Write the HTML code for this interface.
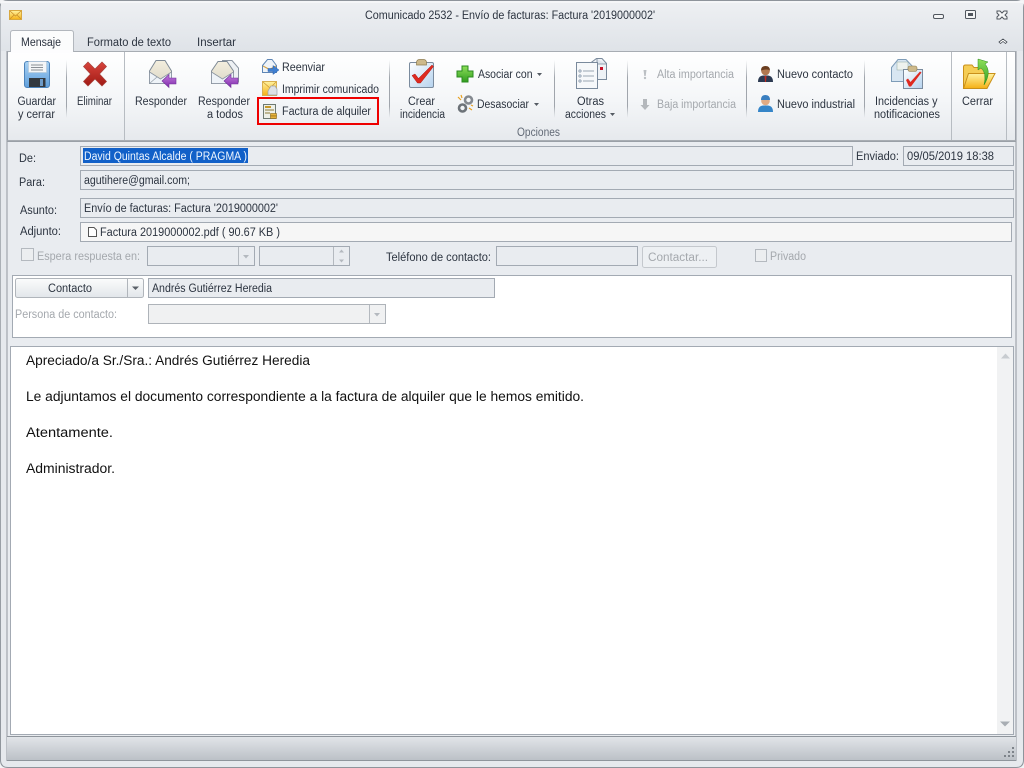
<!DOCTYPE html>
<html lang="es"><head><meta charset="utf-8"><title>Comunicado 2532</title>
<style>
html,body{margin:0;padding:0;width:1024px;height:768px;overflow:hidden;background:#fff}
svg{display:block}
text{font-family:"Liberation Sans",sans-serif;font-size:11.5px;fill:#2c3440}
.g{fill:#a4a8ad}
.b{font-size:13.5px;fill:#111}
.f{fill:#e9ecf0;stroke:#a3aab3}
.d{fill:#f0f1f2;stroke:#aeb3b9}
</style></head><body>
<svg width="1024" height="768" viewBox="0 0 1024 768" xmlns="http://www.w3.org/2000/svg">
<defs>
<linearGradient id="chrome" x1="0" y1="0" x2="0" y2="1"><stop offset="0" stop-color="#eef0f3"/><stop offset="1" stop-color="#dfe3e8"/></linearGradient>
<linearGradient id="rib" x1="0" y1="0" x2="0" y2="1"><stop offset="0" stop-color="#fff"/><stop offset=".55" stop-color="#f4f6f8"/><stop offset="1" stop-color="#e6e9ed"/></linearGradient>
<linearGradient id="sep" x1="0" y1="0" x2="0" y2="1"><stop offset="0" stop-color="#b0b5bb" stop-opacity="0"/><stop offset=".3" stop-color="#a0a5ac"/><stop offset=".8" stop-color="#a0a5ac"/><stop offset="1" stop-color="#b0b5bb" stop-opacity="0"/></linearGradient>
<linearGradient id="stat" x1="0" y1="0" x2="0" y2="1"><stop offset="0" stop-color="#e3e6ea"/><stop offset="1" stop-color="#bcc1c7"/></linearGradient>
<linearGradient id="btn" x1="0" y1="0" x2="0" y2="1"><stop offset="0" stop-color="#fbfcfc"/><stop offset="1" stop-color="#e2e6ea"/></linearGradient>
<linearGradient id="blue" x1="0" y1="0" x2="0" y2="1"><stop offset="0" stop-color="#a9d2f3"/><stop offset="1" stop-color="#5f9fdc"/></linearGradient>
<linearGradient id="env" x1="0" y1="0" x2="0" y2="1"><stop offset="0" stop-color="#f3eede"/><stop offset="1" stop-color="#dcd8c8"/></linearGradient>
<linearGradient id="yel" x1="0" y1="0" x2="0" y2="1"><stop offset="0" stop-color="#fff3a0"/><stop offset="1" stop-color="#f5b015"/></linearGradient>
<linearGradient id="clip" x1="0" y1="0" x2="1" y2="1"><stop offset="0" stop-color="#fff"/><stop offset="1" stop-color="#b5d2ee"/></linearGradient>
<linearGradient id="gr" x1="0" y1="0" x2="0" y2="1"><stop offset="0" stop-color="#8fe05a"/><stop offset="1" stop-color="#2f9c1f"/></linearGradient>
<linearGradient id="red" x1="0" y1="0" x2="0" y2="1"><stop offset="0" stop-color="#d8443c"/><stop offset="1" stop-color="#a01a14"/></linearGradient>
<linearGradient id="pur" x1="0" y1="0" x2="0" y2="1"><stop offset="0" stop-color="#c47be0"/><stop offset="1" stop-color="#7d2aa8"/></linearGradient>
</defs>

<!-- window chrome -->
<rect x="0" y="0" width="1024" height="768" fill="#f2f3f5"/>
<path d="M0 8Q0 .5 8 .5H1016Q1023.500 .5 1023.500 8V760Q1023.500 767.500 1016 767.500H8Q.5 767.500 .5 760Z" fill="#e6e9ed" stroke="#8e949b"/>
<rect x="1" y="1" width="1022" height="50" fill="url(#chrome)"/>
<rect x="1" y="1" width="1022" height="2" fill="#f5f6f8"/>

<!-- title envelope -->
<rect x="9.500" y="10.500" width="12" height="9" fill="url(#yel)" stroke="#d8a840"/>
<path d="M10 11l5.500 5 5.500-5M10 19l4-4M21 19l-4-4" fill="none" stroke="#c98f2a" stroke-width=".8"/>
<text x="365" y="19" textLength="290" lengthAdjust="spacingAndGlyphs">Comunicado 2532 - Envío de facturas: Factura '2019000002'</text>

<!-- window buttons -->
<rect x="933.500" y="14.500" width="10" height="4" rx="1.500" fill="#f4f5f6" stroke="#50565e"/>
<rect x="965.500" y="10.500" width="10" height="8" rx="1" fill="#f4f5f6" stroke="#50565e"/><rect x="968" y="13" width="5" height="3" fill="#50565e"/>
<path d="M997 11h3l2 2 2-2h3v2l-2 2 2 2v2h-3l-2-2-2 2h-3v-2l2-2-2-2Z" fill="#f4f5f6" stroke="#50565e"/>
<path d="M999 42l4-3 4 3-1.500 1.500-2.500-2-2.500 2Z" fill="#fff" stroke="#444a52" stroke-width=".8"/>

<!-- ribbon -->
<rect x="7.500" y="51.500" width="1008" height="89" rx="1" fill="url(#rib)" stroke="#a8adb3"/>
<path d="M10.500 51.500V33Q10.500 30.500 13 30.500H71Q73.500 30.500 73.500 33V51.500" fill="#fbfcfc" stroke="#b2b7bd"/>
<rect x="11" y="50" width="62" height="3" fill="#fdfdfe"/>
<text x="21" y="46" textLength="40" lengthAdjust="spacingAndGlyphs">Mensaje</text>
<text x="87" y="46" textLength="84" lengthAdjust="spacingAndGlyphs">Formato de texto</text>
<text x="197" y="46" textLength="39" lengthAdjust="spacingAndGlyphs">Insertar</text>

<!-- separators -->
<g fill="url(#sep)"><rect x="66" y="60" width="1" height="58"/><rect x="389" y="60" width="1" height="58"/><rect x="554" y="60" width="1" height="58"/><rect x="627" y="60" width="1" height="58"/><rect x="746" y="60" width="1" height="58"/><rect x="864" y="60" width="1" height="58"/></g>
<g fill="#b7bcc2"><rect x="124" y="52" width="1" height="88"/><rect x="951" y="52" width="1" height="88"/><rect x="1006" y="52" width="1" height="88"/></g>

<!-- save -->
<rect x="24.500" y="61.500" width="25" height="26" rx="2.500" fill="url(#blue)" stroke="#4d84bb"/>
<rect x="28.500" y="61.500" width="18" height="11" fill="#f4f6f7" stroke="#b4c6d6" stroke-width=".6"/>
<path d="M31 65h12M31 67.500h12M31 70h12" stroke="#8a9096"/>
<rect x="29" y="78" width="16.500" height="9" fill="#33393f"/><rect x="40" y="79" width="3" height="7" fill="#6d9bc8"/>
<text x="17.500" y="105" textLength="38.500" lengthAdjust="spacingAndGlyphs">Guardar</text><text x="18" y="118" textLength="37" lengthAdjust="spacingAndGlyphs">y cerrar</text>

<!-- delete -->
<path d="M88 62l7 7 7-7 4.500 4.500-7 7.500 7 7.500-4.500 4.500-7-7-7 7-4.500-4.500 7-7.500-7-7.500Z" fill="url(#red)" stroke="#a8403a" stroke-width=".7"/>
<text x="77" y="105" textLength="35" lengthAdjust="spacingAndGlyphs">Eliminar</text>

<!-- reply -->
<path d="M149.500 71L156 60.500H165L171.500 71V83.500H149.500Z" fill="url(#env)" stroke="#7f8a96"/>
<path d="M149.500 72L160.500 79 171.500 72V83.500H149.500Z" fill="#eef3f8" stroke="#8a94a0" stroke-width=".8"/>
<path d="M149.500 83.500L157 77" stroke="#9aa3ae" fill="none" stroke-width=".8"/>
<path d="M162 81l7-6.500v3.500h7v6h-7v3.500Z" fill="url(#pur)" stroke="#71309a" stroke-width=".6"/>
<text x="135" y="105" textLength="52" lengthAdjust="spacingAndGlyphs">Responder</text>

<!-- reply all -->
<path d="M222.500 60.500H232L238.500 68V82H222.500Z" fill="#eef1f4" stroke="#8a94a0"/>
<path d="M211.500 71L218 61.500H227L233.500 71V83.500H211.500Z" fill="url(#env)" stroke="#7f8a96"/>
<path d="M211.500 72L222.500 79 233.500 72V83.500H211.500Z" fill="#eef3f8" stroke="#8a94a0" stroke-width=".8"/>
<path d="M224 81l7-6.500v3.500h7v6h-7v3.500Z" fill="url(#pur)" stroke="#71309a" stroke-width=".6"/>
<text x="198" y="105" textLength="52" lengthAdjust="spacingAndGlyphs">Responder</text><text x="207" y="118" textLength="36" lengthAdjust="spacingAndGlyphs">a todos</text>

<!-- small stack -->
<path d="M262.500 65.500L267.500 59.500H272L276.500 65.500V72.500H262.500Z" fill="#eef3f8" stroke="#5f86b5"/>
<path d="M263 66l6.500 3.500L276 66" fill="none" stroke="#d4a040" stroke-width="1"/>
<path d="M268 68.500h5v-3l6 4.500-6 4.500v-3h-5Z" fill="#3f7fd0" stroke="#2a5ea8" stroke-width=".5"/>
<text x="282" y="71" textLength="43" lengthAdjust="spacingAndGlyphs">Reenviar</text>

<rect x="262.500" y="81.500" width="14" height="14" fill="url(#yel)" stroke="#d8b050"/>
<path d="M263 82l7 6 6-6" fill="none" stroke="#d09a30" stroke-width=".8"/>
<path d="M268 91l3-5h4l2 3v6h-9Z" fill="#dde1e5" stroke="#9aa1a8" stroke-width=".7"/>
<text x="282" y="93" textLength="97" lengthAdjust="spacingAndGlyphs">Imprimir comunicado</text>

<rect x="263.500" y="104.500" width="12" height="14" fill="#eef0e8" stroke="#6d7a72"/>
<path d="M265 110h9M265 113h5" stroke="#8a7a3a"/><rect x="265" y="106" width="6" height="2" fill="#c79a2a"/>
<rect x="270.500" y="113.500" width="6" height="2.500" fill="#e7b23a" stroke="#8c6a1a" stroke-width=".6"/><rect x="270.500" y="116" width="6" height="2.500" fill="#e7b23a" stroke="#8c6a1a" stroke-width=".6"/>
<text x="282" y="115" textLength="89" lengthAdjust="spacingAndGlyphs">Factura de alquiler</text>
<rect x="258" y="98" width="120" height="26" fill="none" stroke="#ee0000" stroke-width="2"/>

<!-- crear incidencia -->
<rect x="409.500" y="62.500" width="24" height="25" rx="1.500" fill="url(#clip)" stroke="#7a8b9e"/>
<path d="M416.500 63q0-3.500 3-3.500h4q3 0 3 3.500v2h-10Z" fill="#cdb98a" stroke="#8e7c50" stroke-width=".7"/>
<path d="M412 75.500l3-1.500 3.500 4.500L432 65l1.500 1.500-13 16.500h-3Z" fill="#de2a20" stroke="#b01a14" stroke-width=".5"/>
<text x="408" y="105" textLength="27" lengthAdjust="spacingAndGlyphs">Crear</text><text x="400" y="118" textLength="45" lengthAdjust="spacingAndGlyphs">incidencia</text>

<!-- asociar -->
<path d="M462 66h6v5h5v6h-5v5h-6v-5h-5v-6h5Z" fill="url(#gr)" stroke="#2a8a1e"/>
<text x="478" y="78" textLength="54.500" lengthAdjust="spacingAndGlyphs">Asociar con</text>
<path d="M537 73h5l-2.500 3Z" fill="#555b63"/>
<!-- desasociar -->
<circle cx="462.500" cy="108" r="3.500" fill="none" stroke="#6c7278" stroke-width="2.600"/><circle cx="468.500" cy="100" r="3.500" fill="none" stroke="#84898f" stroke-width="2.600"/>
<path d="M458 97l3 3M461 95l1 3M469 108l3 2M471 105l2 1" stroke="#e8a020" stroke-width="1.200"/>
<text x="477" y="108" textLength="52" lengthAdjust="spacingAndGlyphs">Desasociar</text>
<path d="M534 103h5l-2.500 3Z" fill="#555b63"/>

<!-- otras acciones -->
<path d="M596.500 58.500H602L606.500 63.500V79.500H590.500V63Z" fill="#eef2f6" stroke="#7a8a9c"/>
<path d="M597 59v5h9" fill="#dfe6ee" stroke="#7a8a9c" stroke-width=".8"/>
<rect x="600" y="67" width="3" height="3" fill="#c8102a"/>
<rect x="576.500" y="62.500" width="21" height="26" fill="#f6f8fa" stroke="#7a8a9c"/>
<path d="M583 71h11M583 76h11M583 81h11" stroke="#9aa6b2"/>
<g fill="#d8e2ec" stroke="#7a8a9c" stroke-width=".6"><circle cx="580" cy="71" r="1.200"/><circle cx="580" cy="76" r="1.200"/><circle cx="580" cy="81" r="1.200"/></g>
<text x="577" y="105" textLength="27" lengthAdjust="spacingAndGlyphs">Otras</text><text x="565" y="118" textLength="41" lengthAdjust="spacingAndGlyphs">acciones</text>
<path d="M610 113h5l-2.500 3Z" fill="#555b63"/>
<text x="517" y="136" textLength="43" lengthAdjust="spacingAndGlyphs" style="fill:#626a76">Opciones</text>

<!-- importancia -->
<path d="M643.500 70h3l-.8 6h-1.400Z" fill="#bcc0c4"/><circle cx="645" cy="78" r="1.200" fill="#bcc0c4"/>
<text x="657" y="78" textLength="77" lengthAdjust="spacingAndGlyphs" class="g">Alta importancia</text>
<path d="M643 99h4v6h2.500L645 110l-4.500-5H643Z" fill="#b4b8bc"/>
<text x="657" y="108" textLength="79" lengthAdjust="spacingAndGlyphs" class="g">Baja importancia</text>

<!-- contacts -->
<path d="M758 82q0-6 5-6.500h5q5 .5 5 6.500Z" fill="#2c3a52"/><path d="M764.500 76h2l-.5 6h-1Z" fill="#c02a20"/>
<circle cx="765.500" cy="71" r="4.300" fill="#b07850"/><path d="M761 70.500q0-4.500 4.500-4.500t4.500 4.500q-2-2-9 0Z" fill="#6a3e20"/>
<text x="777" y="78" textLength="76" lengthAdjust="spacingAndGlyphs">Nuevo contacto</text>
<path d="M758 112q0-6 5-6.500h5q5 .5 5 6.500Z" fill="#3585c8"/>
<circle cx="765.500" cy="101" r="4.300" fill="#e0ab84"/><path d="M761 100q0-5 4.500-5t4.500 5Z" fill="#3a7fc0"/>
<text x="777" y="108" textLength="78" lengthAdjust="spacingAndGlyphs">Nuevo industrial</text>

<!-- incidencias y notificaciones -->
<path d="M891.500 67.500L898 59.500H906L913.500 67.500V81.500H891.500Z" fill="#d8e6f2" stroke="#7e9cb8"/>
<rect x="897" y="62" width="11" height="8" fill="#eef2ee" stroke="#90a8a0" stroke-width=".5"/>
<rect x="903.500" y="69.500" width="19" height="19" fill="url(#clip)" stroke="#7a8b9e"/>
<rect x="908" y="66" width="9" height="5.500" rx="2" fill="#cdb98a" stroke="#8e7c50" stroke-width=".6"/>
<path d="M906 80l2-1.500 2.500 3.500 9.500-10.500 1.500 1-10.500 14h-2Z" fill="#de2a20"/>
<text x="875" y="105" textLength="62.500" lengthAdjust="spacingAndGlyphs">Incidencias y</text><text x="874" y="118" textLength="66" lengthAdjust="spacingAndGlyphs">notificaciones</text>

<!-- cerrar -->
<path d="M963.500 88.500V67Q963.500 65 965.500 65H972L974 67.500H985V88.500Z" fill="#f5cd55" stroke="#c9901a"/>
<path d="M963.500 88.500L968.500 73.500H995L987 88.500Z" fill="url(#yel)" stroke="#c9901a"/>
<path d="M978 59l10 3-3 2q7 8-1 21q3-12-3-17l-3 2Z" fill="url(#gr)" stroke="#2a8a1e" stroke-width=".5"/>
<text x="962" y="105" textLength="31" lengthAdjust="spacingAndGlyphs">Cerrar</text>

<!-- form -->
<rect x="7" y="141" width="1009" height="620" fill="#e9ecf0"/>
<rect x="6.500" y="51" width="1" height="710" fill="#9298a0"/>
<rect x="1015.500" y="51" width="1" height="710" fill="#9298a0"/>
<rect x="7" y="141" width="1009" height="1" fill="#9aa0a7"/>

<text x="19" y="162" textLength="17" lengthAdjust="spacingAndGlyphs">De:</text>
<rect x="80.500" y="146.500" width="772" height="19" class="f"/>
<rect x="83" y="148" width="165" height="15" fill="#1160c8"/>
<text x="84" y="160" textLength="163" lengthAdjust="spacingAndGlyphs" style="fill:#eef6ff">David Quintas Alcalde ( PRAGMA )</text>
<text x="856" y="160" textLength="43" lengthAdjust="spacingAndGlyphs">Enviado:</text>
<rect x="903.500" y="146.500" width="110" height="19" class="f"/>
<text x="907" y="160" textLength="87" lengthAdjust="spacingAndGlyphs">09/05/2019 18:38</text>

<text x="19" y="186" textLength="26" lengthAdjust="spacingAndGlyphs">Para:</text>
<rect x="80.500" y="170.500" width="933" height="19" class="f"/>
<text x="84" y="184" textLength="106" lengthAdjust="spacingAndGlyphs">agutihere@gmail.com;</text>

<text x="20" y="214" textLength="37" lengthAdjust="spacingAndGlyphs">Asunto:</text>
<rect x="80.500" y="198.500" width="933" height="19" class="f"/>
<text x="84" y="212" textLength="194" lengthAdjust="spacingAndGlyphs">Envío de facturas: Factura '2019000002'</text>

<text x="20" y="235" textLength="41" lengthAdjust="spacingAndGlyphs">Adjunto:</text>
<rect x="80.500" y="222.500" width="931" height="19" fill="#f6f6f6" stroke="#a3aab3"/>
<path d="M88.500 227.500H94L96.500 230V236.500H88.500Z" fill="#fff" stroke="#555"/>
<text x="100" y="236" textLength="180" lengthAdjust="spacingAndGlyphs">Factura 2019000002.pdf ( 90.67 KB )</text>

<rect x="21.500" y="248.500" width="12" height="12" fill="#eceef0" stroke="#b4b9bf"/>
<text x="37" y="260" textLength="103" lengthAdjust="spacingAndGlyphs" class="g">Espera respuesta en:</text>
<rect x="147.500" y="246.500" width="107" height="19" class="f"/>
<path d="M238.500 247v18" stroke="#b4b9bf"/><path d="M243 255h6l-3 3.500Z" fill="#b4b9bf"/>
<rect x="259.500" y="246.500" width="90" height="19" class="f"/>
<path d="M333.500 247v18" stroke="#b4b9bf"/><path d="M339 252.500h5l-2.500-3ZM339 259.500h5l-2.500 3Z" fill="#b4b9bf"/>
<text x="386" y="261" textLength="105" lengthAdjust="spacingAndGlyphs">Teléfono de contacto:</text>
<rect x="496.500" y="246.500" width="141" height="19" class="f"/>
<rect x="642.500" y="246.500" width="74" height="21" rx="2" fill="#edf0f3" stroke="#c4c8cd"/>
<text x="648" y="261" textLength="60" lengthAdjust="spacingAndGlyphs" class="g">Contactar...</text>
<rect x="755.500" y="249.500" width="11" height="12" fill="#eceef0" stroke="#b4b9bf"/>
<text x="770" y="260" textLength="36" lengthAdjust="spacingAndGlyphs" class="g">Privado</text>

<rect x="12.500" y="275.500" width="999" height="62" fill="#fff" stroke="#a3aab3"/>
<rect x="15.500" y="278.500" width="128" height="19" rx="2" fill="url(#btn)" stroke="#b0b5bb"/>
<path d="M127.500 279v18" stroke="#b0b5bb"/><path d="M132 286.500h7l-3.500 3.500Z" fill="#5a6068"/>
<text x="48" y="292" textLength="44" lengthAdjust="spacingAndGlyphs">Contacto</text>
<rect x="148.500" y="278.500" width="346" height="19" class="f"/>
<text x="152" y="292" textLength="120" lengthAdjust="spacingAndGlyphs">Andrés Gutiérrez Heredia</text>
<text x="15" y="318" textLength="102" lengthAdjust="spacingAndGlyphs" class="g">Persona de contacto:</text>
<rect x="148.500" y="304.500" width="237" height="19" class="d"/>
<path d="M369.500 305v18" stroke="#b4b9bf"/><path d="M374 313h6l-3 3.500Z" fill="#b4b9bf"/>

<!-- body -->
<rect x="10.500" y="346.500" width="1003" height="388" fill="#fff" stroke="#a3aab3"/>
<rect x="997" y="347" width="16" height="387" fill="#f1f2f3"/>
<path d="M1001 358.500h9l-4.500-5Z" fill="#c8ccd0"/>
<path d="M1000 721.500h10l-5 5Z" fill="#a8adb3"/>
<text x="26" y="365" textLength="284" lengthAdjust="spacingAndGlyphs" class="b">Apreciado/a Sr./Sra.: Andrés Gutiérrez Heredia</text>
<text x="26" y="401" textLength="558" lengthAdjust="spacingAndGlyphs" class="b">Le adjuntamos el documento correspondiente a la factura de alquiler que le hemos emitido.</text>
<text x="26" y="437" textLength="87" lengthAdjust="spacingAndGlyphs" class="b">Atentamente.</text>
<text x="26" y="473" textLength="89" lengthAdjust="spacingAndGlyphs" class="b">Administrador.</text>

<!-- status -->
<rect x="7" y="736" width="1009" height="24" fill="url(#stat)"/>
<rect x="7" y="736" width="1009" height="1" fill="#8f959c"/>
<rect x="7" y="760" width="1009" height="1" fill="#8f959c"/>
<g fill="#7d838a"><rect x="1012" y="747" width="2" height="2"/><rect x="1008" y="751" width="2" height="2"/><rect x="1012" y="751" width="2" height="2"/><rect x="1004" y="755" width="2" height="2"/><rect x="1008" y="755" width="2" height="2"/><rect x="1012" y="755" width="2" height="2"/></g>
</svg>
</body></html>
